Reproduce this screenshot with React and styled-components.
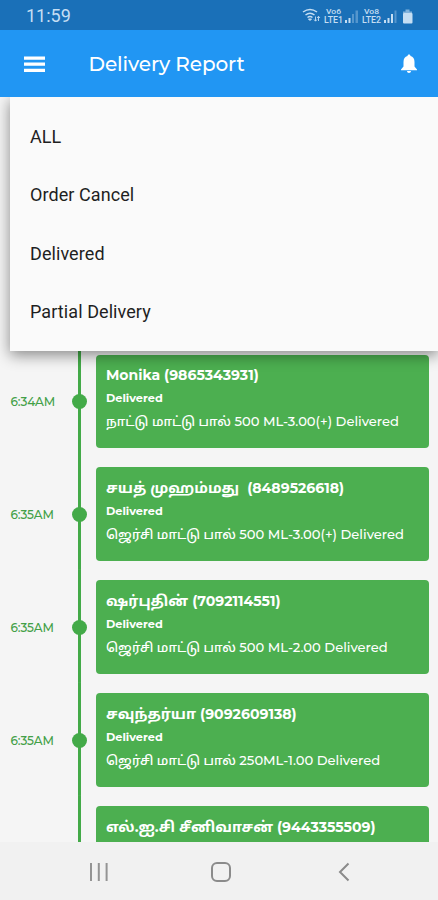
import React from 'react';
import styled, { createGlobalStyle } from 'styled-components';

const GlobalStyle = createGlobalStyle`
  * {
    box-sizing: border-box;
  }

  body {
    margin: 0;
    background: #f5f5f5;
  }
`;

const brandFont = `Montserrat, Inter, 'Noto Sans Tamil', 'Noto Sans', sans-serif`;

const StyledScreen = styled.div`
  position: relative;
  display: flex;
  flex-direction: column;
  width: 438px;
  height: 900px;
  overflow: hidden;
  background: #f5f5f5;
  font-family: ${brandFont};
`;

const StyledStatusBar = styled.div`
  display: flex;
  align-items: center;
  justify-content: space-between;
  flex: 0 0 30px;
  padding: 2px 24px 0 26px;
  background: #1a70b8;
  color: #c5def3;
`;

const StyledClock = styled.span`
  font: 400 18px/28px Roboto, sans-serif;
`;

const StyledStatusIcons = styled.svg`
  display: block;
  width: 112px;
  height: 20px;
`;

const StyledAppBar = styled.header`
  display: flex;
  align-items: center;
  flex: 0 0 67px;
  padding: 0 20px 0 24px;
  background: #2196f3;
  color: #fff;
`;

const StyledTitle = styled.h1`
  flex: 1;
  margin: 0 0 0 42.5px;
  font-size: 20px;
  font-weight: 500;
  line-height: 28px;
  letter-spacing: -0.1px;
`;

const StyledMenu = styled.ul`
  position: absolute;
  top: 97px;
  left: 10px;
  right: 0;
  height: 254px;
  margin: 0;
  padding: 11px 20px 9px;
  list-style: none;
  background: #fafafa;
  box-shadow: 0 4px 14px rgba(0, 0, 0, 0.45);
  clip-path: inset(0 0 -30px -30px);
`;

const StyledMenuItem = styled.li`
  height: 58.4px;
  font: 400 18px/58.4px Roboto, sans-serif;
  letter-spacing: 0.08px;
  color: #1f1f1f;
`;

const StyledTimeline = styled.main`
  flex: 1;
  min-height: 0;
  padding-top: 247.6px;
  overflow: hidden;
`;

const StyledRow = styled.section`
  display: grid;
  grid-template-columns: 68px 23px 1fr;
  height: 112.9px;
`;

const StyledTime = styled.time`
  align-self: center;
  padding: 1.6px 0 0 10.5px;
  font-size: 12px;
  font-weight: 500;
  letter-spacing: -0.1px;
  color: #43a047;
`;

const StyledRail = styled.div`
  display: flex;
  align-items: center;
  justify-content: center;
  padding-top: 1.2px;
  background: linear-gradient(#43aa48, #43aa48) center / 3px 100% no-repeat;
`;

const StyledDot = styled.i`
  width: 15px;
  height: 15px;
  border-radius: 50%;
  background: #43aa48;
`;

const StyledCard = styled.article`
  height: 93.4px;
  margin: 10px 9.5px 9.5px 5px;
  padding: 9.7px 10px 0;
  border-radius: 4px;
  background: #4caf50;
  color: #fff;
  white-space: pre;
`;

const StyledLine = styled.div`
  display: flex;
  height: ${({ $height }) => $height}px;
  font-size: ${({ $size }) => $size}px;
  font-weight: ${({ $weight }) => $weight};
  line-height: ${({ $height }) => $height}px;
`;

const StyledName = styled.span`
  font-size: ${({ $tamil }) => ($tamil ? 14.6 : 14)}px;
`;

const StyledNavBar = styled.nav`
  display: flex;
  align-items: center;
  justify-content: space-between;
  flex: 0 0 58px;
  padding: 2px 84px 0 86px;
  background: #f1f1f1;
`;

const StyledHomeIcon = styled.svg`
  margin-right: 3px;
`;

const menuItems = ['ALL', 'Order Cancel', 'Delivered', 'Partial Delivery'];

const deliveries = [
  { time: '6:34AM', name: 'Monika', phone: ' (9865343931)', product: 'நாட்டு மாட்டு பால்', amount: ' 500 ML-3.00(+) Delivered' },
  { time: '6:35AM', name: 'சயத் முஹம்மது', phone: '  (8489526618)', product: 'ஜெர்சி மாட்டு பால்', amount: ' 500 ML-3.00(+) Delivered' },
  { time: '6:35AM', name: 'ஷர்புதின்', phone: ' (7092114551)', product: 'ஜெர்சி மாட்டு பால்', amount: ' 500 ML-2.00 Delivered' },
  { time: '6:35AM', name: 'சவுந்தர்யா', phone: ' (9092609138)', product: 'ஜெர்சி மாட்டு பால்', amount: ' 250ML-1.00 Delivered' },
  { name: 'எல்.ஐ.சி சீனிவாசன்', phone: ' (9443355509)' },
];

const isTamil = (text) => /[\u0b80-\u0bff]/.test(text);

const StatusIcons = () => (
  <StyledStatusIcons viewBox="0 0 112 20" fill="none" stroke="#c5def3">
    <path d="M1 6q7-5 14 0M3.500 9q4.500-3.500 9 0M5.500 11.500q2.500-1.800 5 0" strokeWidth="1.500" />
    <path d="M8 14.500l-1.500-1.500h3z" fill="#c5def3" />
    <path d="M13.500 10.500v4.500M12 13.500l1.500 1.700 1.500-1.700M16.500 15v-4.500M15 12l1.500-1.700 1.500 1.700" strokeWidth="0.900" />
    <g fill="#c5def3" stroke="none" fontFamily="Roboto, sans-serif" fontWeight="500">
      <text x="24" y="8" fontSize="8" textLength="15" lengthAdjust="spacingAndGlyphs">Vo6</text>
      <text x="22" y="16.500" fontSize="8.500" textLength="19" lengthAdjust="spacingAndGlyphs">LTE1</text>
      <text x="62" y="8" fontSize="8" textLength="15" lengthAdjust="spacingAndGlyphs">Vo8</text>
      <text x="60" y="16.500" fontSize="8.500" textLength="19" lengthAdjust="spacingAndGlyphs">LTE2</text>
      <path d="M43 14h2v3h-2zM46.500 12h2v5h-2z" />
      <path d="M50 8h2v9h-2zM53.500 4.500h2.500v12.500h-2.500z" opacity=".35" />
      <path d="M82 14h2v3h-2zM85.500 12h2v5h-2zM89 8h2v9h-2z" />
      <path d="M92.500 4.500h2v12.500h-2z" opacity=".35" />
      <path d="M103.500 3.500h4v2h2.500v2h-9v-2h2.500z" opacity=".6" />
      <rect x="101" y="7" width="9.500" height="10.500" rx="1" />
    </g>
  </StyledStatusIcons>
);

const MenuIcon = () => (
  <svg width="22" height="17" viewBox="0 0 22 17" fill="#fff">
    <path d="M0 1.500h21v3.200H0zM0 7.600h21v3.200H0zM0 13.700h21v3.200H0z" />
  </svg>
);

const BellIcon = () => (
  <svg width="18" height="20" viewBox="0 0 18 20" fill="#fff">
    <path d="M9 .500c.9 0 1.500.6 1.500 1.600 2.600.7 4 2.900 4 5.900v4.500l2.500 3v.700H1v-.700l2.500-3V8c0-3 1.400-5.200 4-5.900C7.500 1.100 8.100.500 9 .500zM7 17h4c0 1.200-.9 2-2 2s-2-.8-2-2z" />
  </svg>
);

const Delivery = ({ time, name, phone, product, amount }) => (
  <StyledRow>
    {time ? <StyledTime>{time}</StyledTime> : <span />}
    <StyledRail>
      <StyledDot />
    </StyledRail>
    <StyledCard>
      <StyledLine $height={22} $size={14.1} $weight={700}>
        <StyledName $tamil={isTamil(name)}>{name}</StyledName>
        <span>{phone}</span>
      </StyledLine>
      {product ? (
        <>
          <StyledLine $height={24} $size={11.3} $weight={700}>
            Delivered
          </StyledLine>
          <StyledLine $height={22} $size={13.1} $weight={500}>
            <span>{product}</span>
            <span>{amount}</span>
          </StyledLine>
        </>
      ) : null}
    </StyledCard>
  </StyledRow>
);

const App = () => (
  <>
    <GlobalStyle />
    <StyledScreen>
      <StyledStatusBar>
        <StyledClock>11:59</StyledClock>
        <StatusIcons />
      </StyledStatusBar>
      <StyledAppBar>
        <MenuIcon />
        <StyledTitle>Delivery Report</StyledTitle>
        <BellIcon />
      </StyledAppBar>
      <StyledTimeline>
        {deliveries.map((delivery) => (
          <Delivery key={delivery.phone} {...delivery} />
        ))}
      </StyledTimeline>
      <StyledMenu>
        {menuItems.map((item) => (
          <StyledMenuItem key={item}>{item}</StyledMenuItem>
        ))}
      </StyledMenu>
      <StyledNavBar>
        <svg width="25" height="24" viewBox="0 0 25 24" stroke="#949494" strokeWidth="2">
          <path d="M5 3v18M12.800 3v18M20.600 3v18" />
        </svg>
        <StyledHomeIcon width="24" height="24" viewBox="0 0 24 24" fill="none" stroke="#8b8b8b" strokeWidth="2">
          <rect x="3" y="3" width="18" height="18" rx="5" />
        </StyledHomeIcon>
        <svg width="20" height="24" viewBox="0 0 20 24" fill="none" stroke="#8b8b8b" strokeWidth="2">
          <path d="M14.500 3.500L6 12l8.500 8.500" />
        </svg>
      </StyledNavBar>
    </StyledScreen>
  </>
);

export default App;
